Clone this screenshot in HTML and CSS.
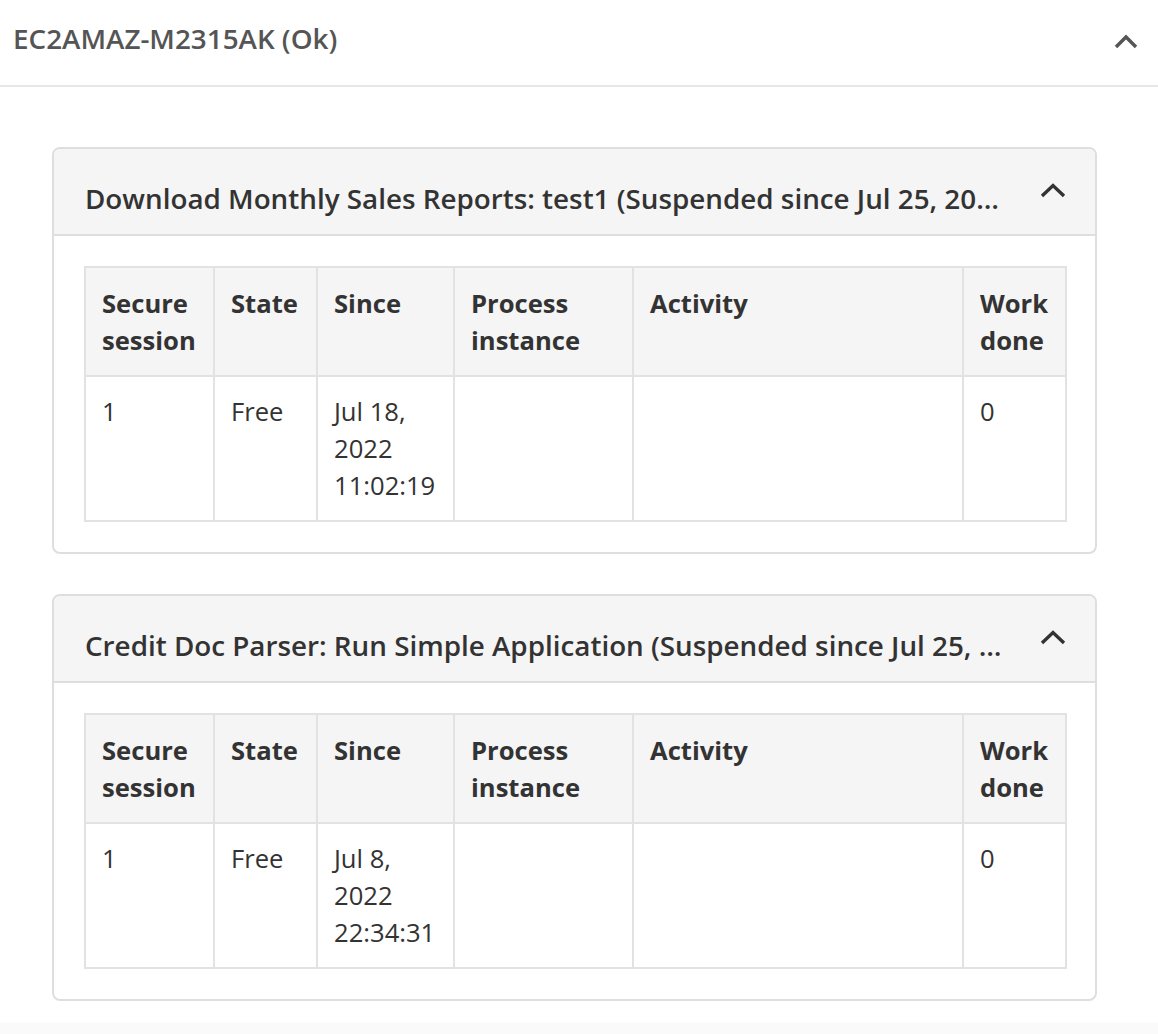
FILE: index.html
```html
<!DOCTYPE html>
<html>
<head>
<meta charset="utf-8">
<link rel="stylesheet" href="styles.css">
</head>
<body>
<div class="page">
  <div class="host-header">
    <div class="host-title">EC2AMAZ-M2315AK (Ok)</div>
    <svg class="chev chev-top" width="24" height="16" viewBox="0 0 24 16"><polyline points="2,13 12,3 22,13" fill="none" stroke="#555" stroke-width="3.4"/></svg>
  </div>
  <div class="content">
    <div class="panel">
      <div class="panel-head">
        <div class="panel-title">Download Monthly Sales Reports: test1 (Suspended since Jul 25, 2022 10:14:05)</div>
        <svg class="chev" width="26" height="16" viewBox="0 0 26 16"><polyline points="2,13 13,2.5 24,13" fill="none" stroke="#333" stroke-width="3.4"/></svg>
      </div>
      <div class="panel-body">
        <table class="sessions">
          <colgroup>
            <col class="c1"><col class="c2"><col class="c3"><col class="c4"><col class="c5"><col class="c6">
          </colgroup>
          <thead>
            <tr><th>Secure session</th><th>State</th><th>Since</th><th>Process instance</th><th>Activity</th><th>Work done</th></tr>
          </thead>
          <tbody>
            <tr><td>1</td><td>Free</td><td>Jul 18, 2022 11:02:19</td><td></td><td></td><td>0</td></tr>
          </tbody>
        </table>
      </div>
    </div>
    <div class="panel">
      <div class="panel-head">
        <div class="panel-title">Credit Doc Parser: Run Simple Application (Suspended since Jul 25, 2022 10:14:05)</div>
        <svg class="chev" width="26" height="16" viewBox="0 0 26 16"><polyline points="2,13 13,2.5 24,13" fill="none" stroke="#333" stroke-width="3.4"/></svg>
      </div>
      <div class="panel-body">
        <table class="sessions">
          <colgroup>
            <col class="c1"><col class="c2"><col class="c3"><col class="c4"><col class="c5"><col class="c6">
          </colgroup>
          <thead>
            <tr><th>Secure session</th><th>State</th><th>Since</th><th>Process instance</th><th>Activity</th><th>Work done</th></tr>
          </thead>
          <tbody>
            <tr><td>1</td><td>Free</td><td>Jul 8, 2022 22:34:31</td><td></td><td></td><td>0</td></tr>
          </tbody>
        </table>
      </div>
    </div>
  </div>
</div>
</body>
</html>
```
FILE: styles.css
```css
html, body {
  margin: 0;
  padding: 0;
}
body {
  background: #fafafa;
  font-family: "Open Sans", "Noto Sans", sans-serif;
  color: #333;
}
.page {
  background: #fff;
  width: 1158px;
}
.host-header {
  height: 85px;
  border-bottom: 2px solid #e6e6e6;
  display: flex;
  align-items: center;
  justify-content: space-between;
  padding: 0 20px 0 13px;
}
.host-title {
  font-size: 27.8px;
  font-weight: 600;
  color: #555;
  margin-top: -9px;
}
.chev-top {
  margin-top: -4px;
}
.content {
  display: flex;
  flex-direction: column;
  gap: 40px;
  padding: 60px 61px 22px 52px;
}
.panel {
  border: 2px solid #dedede;
  border-radius: 8px;
  overflow: hidden;
}
.panel-head {
  background: #f5f5f5;
  border-bottom: 2px solid #dedede;
  display: flex;
  align-items: center;
  gap: 36px;
  padding: 0 29px 0 31px;
  height: 85px;
}
.panel-title {
  flex: 1;
  min-width: 0;
  white-space: nowrap;
  overflow: hidden;
  text-overflow: ellipsis;
  font-size: 27.8px;
  font-weight: 600;
  line-height: 37px;
  color: #333;
  padding-top: 13px;
}
.chev {
  flex: none;
  margin-top: -2px;
}
.panel-body {
  padding: 30px 30px 30px;
}
.sessions {
  width: 981px;
  border-collapse: collapse;
  table-layout: fixed;
  font-size: 25.6px;
  line-height: 37px;
}
.c1 { width: 129px; }
.c2 { width: 103px; }
.c3 { width: 137px; }
.c4 { width: 179px; }
.c5 { width: 330px; }
.c6 { width: 103px; }
.sessions th,
.sessions td {
  border: 2px solid #e2e2e2;
  text-align: left;
  vertical-align: top;
  color: #333;
}
.sessions th {
  background: #f5f5f5;
  font-weight: 700;
  padding: 17px 16px 16px;
}
.sessions td {
  font-weight: 400;
  height: 111px;
  padding: 16px 16px 16px;
}
```
